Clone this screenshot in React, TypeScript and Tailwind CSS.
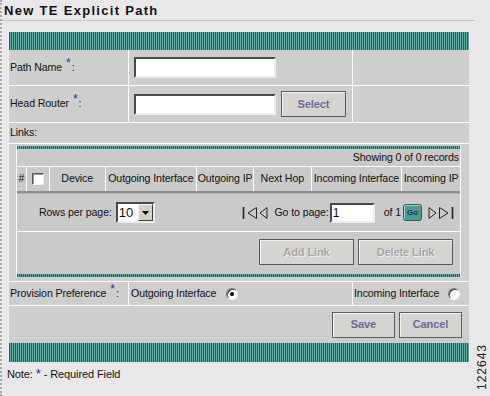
import React from "react";

const teal =
  "bg-[image:repeating-linear-gradient(90deg,#0f6a62_0px,#0f6a62_1px,#62aaa2_1px,#62aaa2_2px)]";

function Req() {
  return <span className="text-[#2b2ba8] text-[12px] relative -top-[5px] ml-[4px] mr-[1px]">*</span>;
}

function TextInput({ w, value }: { w: string; value?: string }) {
  return (
    <div
      className={
        "h-[21px] bg-white border-2 border-t-[#4a4a4a] border-l-[#4a4a4a] border-b-[#ececec] border-r-[#ececec] text-[12px] leading-[17px] pl-[1px] " +
        w
      }
    >
      {value}
    </div>
  );
}

function Btn({ label, w, disabled }: { label: string; w: string; disabled?: boolean }) {
  return (
    <div
      className={
        "h-[26px] flex items-center justify-center bg-[#d6d4d0] border border-[#5c5c5c] shadow-[inset_1px_1px_0_#f4f4f4] text-[11px] font-bold " +
        (disabled ? "text-[#a6a6a6] [text-shadow:1px_1px_0_#f2f2f2] " : "text-[#6a6a9c] ") +
        w
      }
    >
      {label}
    </div>
  );
}

function Radio({ checked }: { checked?: boolean }) {
  return (
    <div className="w-[12px] h-[12px] rounded-full bg-white border border-t-[#7a7a7a] border-l-[#7a7a7a] border-b-[#f4f4f4] border-r-[#f4f4f4] shadow-[inset_1px_1px_0_#3a3a3a] flex items-center justify-center">
      {checked && <div className="w-[4px] h-[4px] rounded-full bg-black" />}
    </div>
  );
}

function PageIcon({ dir, bar }: { dir: "l" | "r"; bar?: boolean }) {
  const w = bar ? 16 : 9;
  return (
    <svg width={w} height="14" viewBox={`0 0 ${w} 14`}>
      {dir == "l" ? (
        <>
          {bar && <path d="M1.5 1v12" stroke="#222" strokeWidth="1.6" />}
          <path
            d={bar ? "M14.5 1.5 L6 7 L14.5 12.5 Z" : "M8 1.5 L1 7 L8 12.5 Z"}
            fill="none"
            stroke="#222"
          />
        </>
      ) : (
        <>
          <path
            d={bar ? "M1.5 1.5 L10 7 L1.5 12.5 Z" : "M1 1.5 L8 7 L1 12.5 Z"}
            fill="none"
            stroke="#222"
          />
          {bar && <path d="M14.5 1v12" stroke="#222" strokeWidth="1.6" />}
        </>
      )}
    </svg>
  );
}

const headers = [
  { label: "#", w: "w-[10px]" },
  { label: "", w: "w-[23px]" },
  { label: "Device", w: "w-[56px]" },
  { label: "Outgoing Interface", w: "w-[92px]" },
  { label: "Outgoing IP", w: "w-[57px]" },
  { label: "Next Hop", w: "w-[58px]" },
  { label: "Incoming Interface", w: "w-[91px]" },
  { label: "Incoming IP", w: "w-[58px]" },
];

export default function App() {
  return (
    <div className="w-[490px] h-[396px] bg-[#e9e7e9] border-l-2 border-dotted border-[#a9a9a9] font-['Liberation_Sans',Arial,sans-serif] text-[10.6px] tracking-[-0.1px] text-[#111] relative overflow-hidden">
      <div className="h-[21px] w-[473px] pl-[2px] pt-[3px] border-b border-[#c6c4c6] text-[13px] leading-[15px] font-bold tracking-[1.3px]">
        New TE Explicit Path
      </div>

      <div className="ml-[6px] mt-[11px] w-[461px] bg-[#cecece] border-l border-[#ececec]">
        <div className={"h-[18px] " + teal} />

        <div className="h-[36px] flex border-b border-white">
          <div className="w-[120px] border-r border-white flex items-center pl-[1px]">
            Path Name<Req />:
          </div>
          <div className="w-[224px] border-r border-white flex items-center pl-[5px]">
            <TextInput w="w-[142px]" />
          </div>
          <div className="flex-1" />
        </div>

        <div className="h-[37px] flex border-b border-white">
          <div className="w-[120px] border-r border-white flex items-center pl-[1px]">
            Head Router<Req />:
          </div>
          <div className="w-[224px] border-r border-white flex items-center pl-[5px] gap-[5px]">
            <TextInput w="w-[142px]" />
            <Btn label="Select" w="w-[65px]" />
          </div>
          <div className="flex-1" />
        </div>

        <div className="h-[21px] flex items-center pl-[1px] border-b border-white">Links:</div>

        <div className="pt-[2px] pb-[4px] pl-[7px]">
          <div className="w-[445px] border-l border-r border-white bg-[#cacaca]">
            <div className={"h-[3px] " + teal} />
            <div className="h-[18px] flex items-center justify-end pr-[1px] border-b border-white">
              Showing 0 of 0 records
            </div>
            <div className="h-[24px] flex">
              {headers.map((h, i) => (
                <div
                  key={i}
                  className={
                    "flex items-center justify-center whitespace-nowrap " +
                    h.w +
                    (i < headers.length - 1 ? " border-r border-white" : "")
                  }
                >
                  {i == 1 ? (
                    <div className="w-[12px] h-[12px] bg-white border border-t-[#5a5a5a] border-l-[#5a5a5a] border-b-[#f0f0f0] border-r-[#f0f0f0] shadow-[inset_1px_1px_0_#9a9a9a]" />
                  ) : (
                    h.label
                  )}
                </div>
              ))}
            </div>
            <div className="h-[3px] bg-[#8e8e8e] border-b border-[#b4b4b4]" />
            <div className="h-[38px] flex items-center border-b border-white pl-[22px] pr-[6px]">
              <span>Rows per page:</span>
              <div className="ml-[4px] h-[21px] w-[39px] flex bg-white border-2 border-t-[#4a4a4a] border-l-[#4a4a4a] border-b-[#ececec] border-r-[#ececec]">
                <div className="flex-1 text-[13px] leading-[17px] pl-[1px]">10</div>
                <div className="w-[15px] bg-[#d4d0c8] border border-t-[#f4f4f4] border-l-[#f4f4f4] border-b-[#404040] border-r-[#404040] flex items-center justify-center">
                  <svg width="7" height="4" viewBox="0 0 7 4">
                    <path d="M0 0h7L3.5 4z" fill="#000" />
                  </svg>
                </div>
              </div>
              <div className="flex-1" />
              <PageIcon dir="l" bar />
              <span className="ml-[1px]">
                <PageIcon dir="l" />
              </span>
              <span className="ml-[6px]">Go to page:</span>
              <div className="ml-[1px] h-[20px] w-[45px] bg-white border-2 border-t-[#4a4a4a] border-l-[#4a4a4a] border-b-[#ececec] border-r-[#ececec] text-[12px] leading-[16px] pl-[1px]">
                1
              </div>
              <span className="ml-[9px]">of 1</span>
              <div className="ml-[2px] w-[19px] h-[17px] rounded-[3px] bg-[#4b9a95] border border-[#2c5f5c] shadow-[inset_1px_1px_0_#9fd0cc] flex items-center justify-center text-[8px] font-bold text-[#14345e]">
                Go
              </div>
              <span className="ml-[6px]">
                <PageIcon dir="r" />
              </span>
              <span className="ml-[1px]">
                <PageIcon dir="r" bar />
              </span>
            </div>
            <div className="h-[42px] flex justify-end items-start pt-[7px] pr-[7px] gap-[4px]">
              <Btn label="Add Link" w="w-[95px] h-[25px]" disabled />
              <Btn label="Delete Link" w="w-[95px] h-[25px]" disabled />
            </div>
            <div className={"h-[3px] " + teal} />
          </div>
        </div>

        <div className="h-[25px] flex border-t border-b border-white">
          <div className="w-[120px] border-r border-white flex items-center pl-[1px] whitespace-nowrap">
            Provision Preference<Req />:
          </div>
          <div className="w-[224px] border-r border-white flex items-center pl-[2px] gap-[10px]">
            <span>Outgoing Interface</span>
            <Radio checked />
          </div>
          <div className="flex-1 flex items-center pl-[1px] gap-[9px]">
            <span>Incoming Interface</span>
            <Radio />
          </div>
        </div>

        <div className="h-[37px] flex items-center justify-end pr-[7px] gap-[4px]">
          <Btn label="Save" w="w-[63px]" />
          <Btn label="Cancel" w="w-[63px]" />
        </div>

        <div className={"h-[19px] " + teal} />
      </div>

      <div className="pl-[5px] pt-[2px] text-[11px]">
        Note: <span className="text-[#2b2ba8] text-[13px]">*</span> - Required Field
      </div>

      <div className="absolute left-[457px] top-[361px] -rotate-90 text-[12px] leading-[12px] tracking-[1px] text-[#222] w-[46px] text-center">
        122643
      </div>
    </div>
  );
}
